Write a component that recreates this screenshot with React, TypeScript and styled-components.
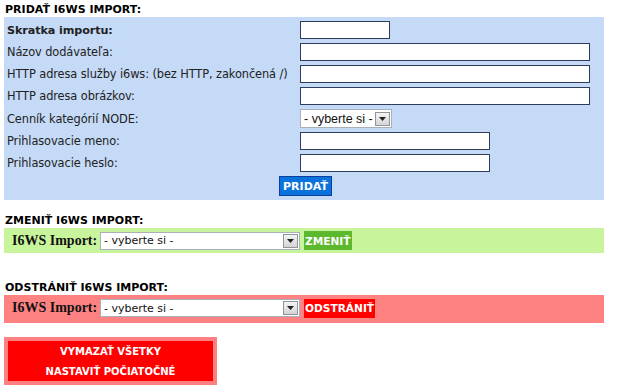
import React from 'react'
import styled, { createGlobalStyle } from 'styled-components'

const Global = createGlobalStyle`
  body {
    margin: 0;
    background: #fff;
    font-family: "DejaVu Sans", Verdana, sans-serif;
    color: #000;
  }
`

const Page = styled.div`
  width: 600px;
  padding: 3px 0 0 4px;
`

const Heading = styled.div<{ $top: number }>`
  margin-top: ${p => p.$top}px;
  padding-left: 1px;
  height: 14px;
  line-height: 14px;
  font-size: 11px;
  font-weight: bold;
  white-space: nowrap;
`

const FormPanel = styled.div`
  background: #c5daf7;
  display: grid;
  grid-template-columns: 293px 1fr;
  row-gap: 4px;
  padding: 4px 0 4px 3px;
`

const Label = styled.div<{ $bold?: boolean }>`
  display: flex;
  align-items: center;
  font-size: ${p => (p.$bold ? 11.2 : 11.4)}px;
  font-weight: ${p => (p.$bold ? 'bold' : 'normal')};
  color: #222;
  white-space: nowrap;
  letter-spacing: -0.1px;
`

const Field = styled.div`
  display: flex;
  align-items: center;
`

const Input = styled.input<{ $w: number }>`
  display: block;
  box-sizing: border-box;
  width: ${p => p.$w}px;
  height: 18px;
  border: 1px solid #2f3d5c;
  background: #fff;
  padding: 0 2px;
  margin: 0;
  font-size: 11px;
`

const SelectBox = styled.div<{ $w: number; $h: number }>`
  box-sizing: border-box;
  width: ${p => p.$w}px;
  height: ${p => p.$h}px;
  display: flex;
  align-items: center;
  background: #fff;
  border: 1px solid #a9b0b8;
  padding: 1px;
`

const SelectText = styled.span<{ $narrow?: boolean }>`
  flex: 1;
  padding-left: 2px;
  font-family: ${p => (p.$narrow ? '"Liberation Sans", Arial' : '"DejaVu Sans", Verdana')}, sans-serif;
  font-size: ${p => (p.$narrow ? 12.5 : 11)}px;
  color: #111;
  white-space: nowrap;
  overflow: hidden;
`

const ArrowBox = styled.span`
  box-sizing: border-box;
  width: 15px;
  height: 14px;
  display: flex;
  align-items: center;
  justify-content: center;
  background: linear-gradient(#f4f4f4, #d4d4d4);
  border: 1px solid #8e959c;
`

const ButtonRow = styled.div`
  grid-column: 1 / -1;
  display: flex;
  justify-content: center;
`

const Button = styled.button<{ $bg: string; $border?: string }>`
  display: block;
  box-sizing: border-box;
  height: ${p => (p.$border ? 20 : 19)}px;
  padding: 0 ${p => (p.$border ? 3 : 1)}px;
  margin: 0;
  background: ${p => p.$bg};
  border: ${p => (p.$border ? `1px solid ${p.$border}` : 'none')};
  color: #fff;
  font-family: "DejaVu Sans", Verdana, sans-serif;
  font-size: ${p => (p.$border ? 11 : 10.6)}px;
  font-weight: bold;
  cursor: pointer;
`

const BarPanel = styled.div<{ $bg: string; $h: number }>`
  box-sizing: border-box;
  height: ${p => p.$h}px;
  background: ${p => p.$bg};
  display: flex;
  align-items: center;
  gap: 4px;
  padding: 0 0 ${p => (p.$h > 26 ? 2 : 0)}px 8px;
`

const BarLabel = styled.span`
  width: 84px;
  font-family: "Liberation Serif", "Times New Roman", serif;
  font-size: 14px;
  font-weight: bold;
  color: #111;
  white-space: nowrap;
`

const ResetFrame = styled.div`
  margin-top: 14px;
  width: 213px;
  box-sizing: border-box;
  border: 4px solid #ff8080;
`

const ResetButton = styled.button`
  display: block;
  width: 100%;
  height: 40px;
  margin: 0;
  padding: 1px 0 0;
  border: none;
  background: #ff0000;
  color: #fff;
  font-family: "DejaVu Sans", Verdana, sans-serif;
  font-size: 10px;
  font-weight: bold;
  line-height: 20px;
  cursor: pointer;
`

const Arrow = () => (
  <ArrowBox>
    <svg width="7" height="4" viewBox="0 0 7 4">
      <path d="M0 0h7L3.5 4z" fill="#222" />
    </svg>
  </ArrowBox>
)

const Select = ({ w, h, narrow }: { w: number; h: number; narrow?: boolean }) => (
  <SelectBox $w={w} $h={h}>
    <SelectText $narrow={narrow}>- vyberte si -</SelectText>
    <Arrow />
  </SelectBox>
)

const fields = [
  { label: 'Názov dodávateľa:', w: 290 },
  { label: 'HTTP adresa služby i6ws: (bez HTTP, zakončená /)', w: 290 },
  { label: 'HTTP adresa obrázkov:', w: 290 },
]

const App = () => {
  return (
    <Page>
      <Global />
      <Heading $top={0}>PRIDAŤ I6WS IMPORT:</Heading>
      <FormPanel>
        <Label $bold>Skratka importu:</Label>
        <Field><Input $w={90} /></Field>
        {fields.map(f => (
          <React.Fragment key={f.label}>
            <Label>{f.label}</Label>
            <Field><Input $w={f.w} /></Field>
          </React.Fragment>
        ))}
        <Label>Cenník kategórií NODE:</Label>
        <Field><Select w={92} h={19} narrow /></Field>
        <Label>Prihlasovacie meno:</Label>
        <Field><Input $w={190} /></Field>
        <Label>Prihlasovacie heslo:</Label>
        <Field><Input $w={190} /></Field>
        <ButtonRow>
          <Button $bg="#0a72dc" $border="#0a3f9c">PRIDAŤ</Button>
        </ButtonRow>
      </FormPanel>

      <Heading $top={14}>ZMENIŤ I6WS IMPORT:</Heading>
      <BarPanel $bg="#c8f59b" $h={25}>
        <BarLabel>I6WS Import:</BarLabel>
        <Select w={200} h={18} />
        <Button $bg="#5cb82c">ZMENIŤ</Button>
      </BarPanel>

      <Heading $top={28}>ODSTRÁNIŤ I6WS IMPORT:</Heading>
      <BarPanel $bg="#ff8282" $h={28}>
        <BarLabel>I6WS Import:</BarLabel>
        <Select w={200} h={18} />
        <Button $bg="#ff0000">ODSTRÁNIŤ</Button>
      </BarPanel>

      <ResetFrame>
        <ResetButton>
          VYMAZAŤ VŠETKY
          <br />
          NASTAVIŤ POČIATOČNÉ
        </ResetButton>
      </ResetFrame>
    </Page>
  )
}

export default App
